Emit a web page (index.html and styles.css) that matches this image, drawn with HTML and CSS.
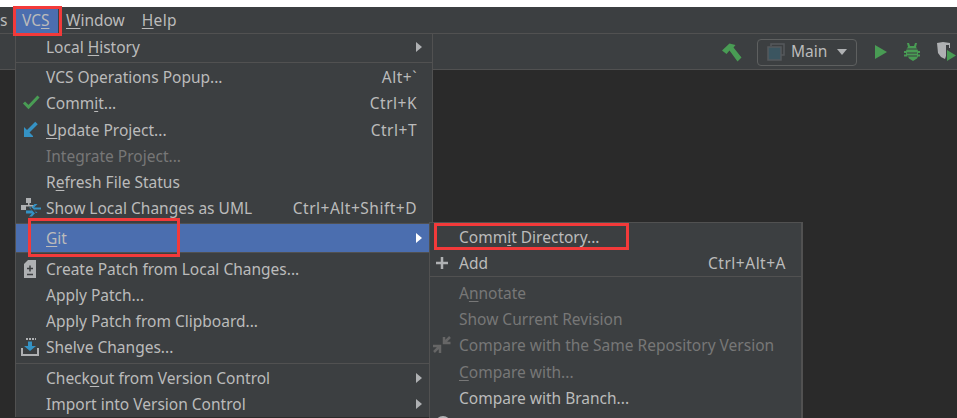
FILE: index.html
```html
<!DOCTYPE html>
<html lang="en">
<head>
<meta charset="utf-8">
<title>VCS menu</title>
<link rel="stylesheet" href="styles.css">
</head>
<body>
<div class="ide">
  <div class="top-strip"></div>
  <nav class="menubar">
    <span class="mb-item mb-cut">s</span>
    <span class="mb-item mb-active">VC<u>S</u></span>
    <span class="mb-item"><u>W</u>indow</span>
    <span class="mb-item"><u>H</u>elp</span>
  </nav>
  <div class="toolbar">
    <svg class="tb-hammer" width="20" height="19" viewBox="0 0 20 19"><path d="M0 7.500 7.500 0.500 13.500 2 11.500 4.500 19.500 14.500 15.500 18.500 7.500 7.500 4.500 11z" fill="#499c54"/></svg>
    <div class="combo">
      <svg width="18" height="18" viewBox="0 0 18 18"><path d="M4 3V1h13v11h-3" fill="none" stroke="#55595c" stroke-width="1.500"/><rect x="1" y="4" width="13" height="13" fill="#3b5560" stroke="#55595c" stroke-width="1.500"/></svg>
      <span>Main</span>
      <i class="caret"></i>
    </div>
    <svg class="tb-play" width="12" height="14" viewBox="0 0 12 14"><path d="M0 0l12 7L0 14z" fill="#499c54"/></svg>
    <svg class="tb-bug" width="16" height="18" viewBox="0 0 16 18"><path d="M3 0h2l1 3h4l1-3h2l-1 4 1 1.500H2.500L4 4zM2.500 6.500h11l.5 1.500h2v2h-2v1.500h2v2h-2l-1 2-4 2.500-4-2.500-1-2H0v-2h2V10H0V8h2z" fill="#499c54"/><path d="M3 10h10M3 13h10" stroke="#3c3f41" stroke-width="1.200"/></svg>
    <svg class="tb-cover" width="21" height="20" viewBox="0 0 21 20"><path d="M1 1l6-1 7 1v5H10v8l-1 3-4-2-3-4z" fill="#afb1b3"/><path d="M10 3h3v3h-3z" fill="#3c3f41"/><path d="M11 8l9 5.500-9 5.500z" fill="#499c54"/></svg>
  </div>
  <div class="editor"></div>

  <div class="menu menu-main">
    <div class="row"><span class="label">Local <u>H</u>istory</span><i class="arrow"></i></div>
    <div class="sep"></div>
    <div class="row"><span class="label">VCS Operations Popup...</span><span class="key">Alt+`</span></div>
    <div class="row"><svg class="icon" width="24" height="20" viewBox="0 0 24 20"><path d="M6 9.500l4.500 4.500L20.500 3.500" fill="none" stroke="#499c54" stroke-width="3"/></svg><span class="label">Comm<u>i</u>t...</span><span class="key">Ctrl+K</span></div>
    <div class="row"><svg class="icon" width="24" height="20" viewBox="0 0 24 20"><path d="M18.500 3 9 12.500" fill="none" stroke="#3592c4" stroke-width="3.500"/><path d="M6 7l3 3 6 6v1H6z" fill="#3592c4"/></svg><span class="label"><u>U</u>pdate Project...</span><span class="key">Ctrl+T</span></div>
    <div class="row off"><span class="label">Integrate Project...</span></div>
    <div class="row"><span class="label">R<u>e</u>fresh File Status</span></div>
    <div class="row"><svg class="icon" width="24" height="20" viewBox="0 0 24 20"><path d="M8 0h5v5H8zM10 5h1.500v2H10zM3 7h13v1.500H3zM3 8.500h5V12H3zM14 8.500h2V10h-2z" fill="#afb1b3"/><path d="M23 9.500h-7l3.500-3.500h-3l-4 4.500 4 4.500h3L16 11.500h7zM8 12.500h6l-3-3h3l4 4.500-4 4.500h-3l3-3H8z" fill="#3592c4"/></svg><span class="label">Show Local Changes as UML</span><span class="key">Ctrl+Alt+Shift+D</span></div>
    <div class="sep sep-before"></div>
    <div class="row row-git"><span class="label"><u>G</u>it</span><i class="arrow arrow-lit"></i></div>
    <div class="sep sep-after"></div>
    <div class="row"><svg class="icon" width="24" height="20" viewBox="0 0 24 20"><path d="M10 1h8v18H6V5z" fill="#afb1b3"/><path d="M12 6.500v6M9 9.500h6M9 15.500h6" stroke="#3c3f41" stroke-width="1.500"/></svg><span class="label">Create Patch from Local Changes...</span></div>
    <div class="row"><span class="label">Apply Patch...</span></div>
    <div class="row"><span class="label">Apply Patch from Clipboard...</span></div>
    <div class="row"><svg class="icon" width="24" height="20" viewBox="0 0 24 20"><path d="M3 11v8h18v-8h-2v6H5v-6z" fill="#afb1b3"/><path d="M8 2h2M11 2h2M14 2h2M17 2h1" stroke="#afb1b3" stroke-width="2"/><path d="M10 4.500h4V9h4l-6 5-6-5h4z" fill="#3592c4"/></svg><span class="label">Shelve Changes...</span></div>
    <div class="sep"></div>
    <div class="row"><span class="label">Check<u>o</u>ut from Version Control</span><i class="arrow"></i></div>
    <div class="row"><span class="label">Import into Version Control</span><i class="arrow"></i></div>
  </div>

  <div class="menu menu-sub">
    <div class="row"><span class="label">Comm<u>i</u>t Directory...</span></div>
    <div class="row"><svg class="icon" width="24" height="20" viewBox="0 0 24 20"><path d="M4 10h12M10 4v12" stroke="#afb1b3" stroke-width="2.500"/></svg><span class="label">Add</span><span class="key">Ctrl+Alt+A</span></div>
    <div class="sep"></div>
    <div class="row off"><span class="label">A<u>n</u>notate</span></div>
    <div class="row off"><span class="label">Show Current Revision</span></div>
    <div class="row off"><svg class="icon" width="24" height="20" viewBox="0 0 24 20"><path d="M18 2l-5 5M12 2v6h6.500" fill="none" stroke="#666" stroke-width="2.500"/><path d="M1 11h7v7M7.500 11.500 2 17" fill="none" stroke="#666" stroke-width="2.500"/></svg><span class="label">Compare with the Same Repository Version</span></div>
    <div class="row off"><span class="label"><u>C</u>ompare with...</span></div>
    <div class="row"><span class="label">Compare with Branch...</span></div>
    <div class="row"><svg class="icon" width="24" height="20" viewBox="0 0 24 20"><circle cx="11" cy="10" r="7" fill="none" stroke="#afb1b3" stroke-width="2"/></svg><span class="label"></span></div>
  </div>

  <div class="mark mark-vcs"></div>
  <div class="mark mark-git"></div>
  <div class="mark mark-commit"></div>
</div>
</body>
</html>
```
FILE: styles.css
```css
* { box-sizing: border-box; }
html, body { margin: 0; height: 100%; overflow: hidden; }
body { background: #2a2a2a; }
u { text-underline-offset: 2px; text-decoration-thickness: 1px; }

.ide {
  position: relative;
  width: 957px;
  height: 418px;
  overflow: hidden;
  display: flex;
  flex-direction: column;
  font: 15.500px "Noto Sans", "Open Sans", sans-serif;
  color: #bbbbbb;
}
.top-strip { height: 7px; background: #fff; flex: none; }
.menubar {
  height: 27px;
  flex: none;
  background: #3c3f41;
  border-bottom: 1px solid #515151;
  display: flex;
  align-items: center;
  line-height: 27px;
}
.mb-item { padding: 0 8px; height: 26px; }
.mb-item:last-child { padding-left: 9px; letter-spacing: .3px; }
.mb-cut { padding: 0; width: 15px; }
.mb-active { background: #4b6eaf; width: 43px; padding: 0 7px; }

.toolbar {
  height: 36px;
  flex: none;
  background: #3c3f41;
  border-bottom: 1px solid #515151;
  padding-top: 1px;
  display: flex;
  align-items: center;
  justify-content: flex-end;
}
.tb-hammer { margin-right: 15px; }
.combo {
  width: 100px;
  height: 27px;
  border: 1px solid #5e6060;
  border-radius: 4px;
  display: flex;
  align-items: center;
  gap: 6px;
  padding-left: 9px;
  margin-right: 18px;
  line-height: 1;
}
.caret {
  margin-left: 4px;
  border-left: 5px solid transparent;
  border-right: 5px solid transparent;
  border-top: 6px solid #afb1b3;
}
.tb-play { margin-right: 17px; }
.tb-bug { margin-right: 16px; }
.tb-cover { flex: none; }
.editor { flex: 1; background: #2a2a2a; }

.menu {
  position: absolute;
  background: #3c3f41;
  display: flex;
  flex-direction: column;
}
.menu-main {
  left: 15px;
  top: 34px;
  width: 418px;
  border-left: 1px solid #515151;
  border-right: 1px solid #515151;
}
.menu-sub {
  left: 429px;
  top: 222px;
  width: 374px;
  padding-top: 1px;
  border-style: solid;
  border-color: #515151;
  border-width: 1px 2px 0 1px;
}
.row {
  height: 26.200px;
  flex: none;
  display: flex;
  align-items: center;
  padding-left: 30px;
  padding-right: 15px;
  position: relative;
  white-space: nowrap;
}
.menu-sub .row { padding-left: 29px; }
.label { flex: 1; }
.key { flex: none; letter-spacing: .5px; }
.off { color: #777777; }
.sep { height: 1px; background: #515151; margin: 2px 0 1px; flex: none; }
.menu-sub .sep { margin: 0 0 2.500px; }
.sep-before { margin: 1.500px 0 0; }
.sep-after { margin: 0 0 3px; }
.row-git { background: #4b6eaf; height: 28px; }
.icon { position: absolute; left: 2px; top: 50%; transform: translateY(-50%); }
.arrow {
  flex: none;
  margin-right: -5px;
  border-top: 5px solid transparent;
  border-bottom: 5px solid transparent;
  border-left: 6px solid #afb1b3;
}
.arrow-lit { border-left-color: #fff; }

.mark { position: absolute; border: 3px solid #f33a3a; }
.mark-vcs { left: 13px; top: 6px; width: 49px; height: 30px; }
.mark-git { left: 28px; top: 218px; width: 152px; height: 39px; }
.mark-commit { left: 434px; top: 223px; width: 195px; height: 27px; }
```
